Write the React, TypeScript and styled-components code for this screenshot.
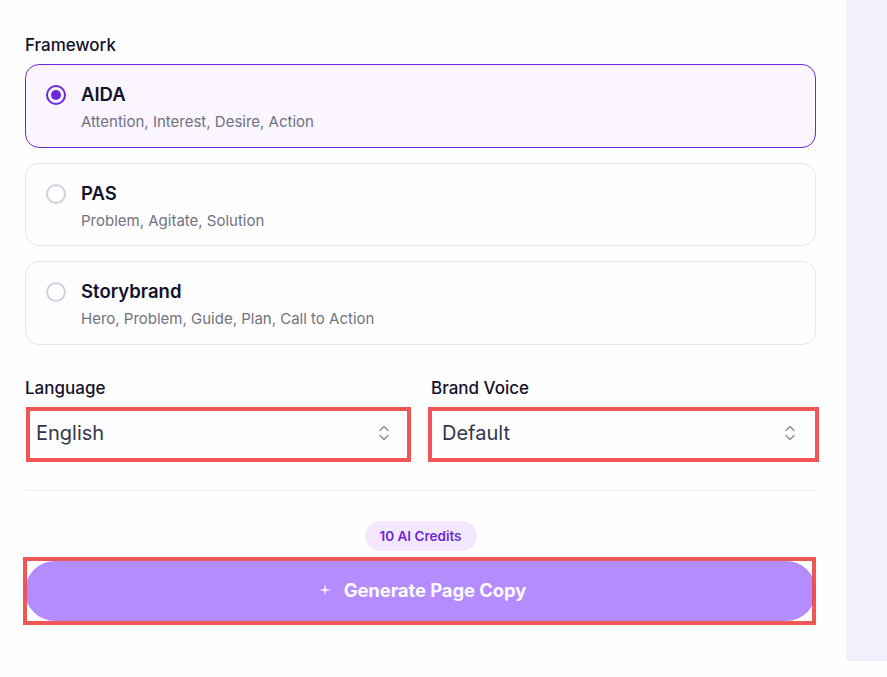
import React from "react";
import styled, { createGlobalStyle } from "styled-components";

const Global = createGlobalStyle`
  html, body { margin: 0; padding: 0; background: #fefefe; }
  body { font-family: Inter, "Liberation Sans", sans-serif; }
`;

const Page = styled.div`
  width: 887px;
  height: 677px;
  overflow: hidden;
  display: flex;
  align-items: flex-start;
  background: #fefefe;
`;

const Main = styled.main`
  width: 846px;
  box-sizing: border-box;
  padding: 35px 30px 0 25px;
  display: flex;
  flex-direction: column;
`;

const Side = styled.aside`
  width: 41px;
  height: 661px;
  background: #f3f0fd;
`;

const Label = styled.div`
  font-size: 17px;
  line-height: 21px;
  font-weight: 500;
  color: #14122b;
`;

const Cards = styled.div`
  margin-top: 8px;
  display: flex;
  flex-direction: column;
  gap: 15px;
`;

const Card = styled.div<{ $on?: boolean; $tall?: boolean }>`
  box-sizing: border-box;
  height: ${p => (p.$tall ? 84 : 83)}px;
  border-radius: 14px;
  border: 1px solid ${p => (p.$on ? "#6d28d9" : "#e7e7ec")};
  background: ${p => (p.$on ? "#faf5ff" : "#fefefe")};
  padding: 18px 20px 0;
  display: flex;
  gap: 15px;
`;

const Radio = styled.span<{ $on?: boolean }>`
  box-sizing: border-box;
  flex: none;
  width: 20px;
  height: 20px;
  margin-top: 2px;
  border-radius: 50%;
  border: 2px solid ${p => (p.$on ? "#6d28d9" : "#d3d1e0")};
  display: flex;
  align-items: center;
  justify-content: center;
  &::after {
    content: "";
    display: ${p => (p.$on ? "block" : "none")};
    width: 10px;
    height: 10px;
    border-radius: 50%;
    background: #6d28d9;
  }
`;

const CardBody = styled.div`
  display: flex;
  flex-direction: column;
  gap: 7px;
`;

const CardTitle = styled.div`
  font-size: 18.5px;
  line-height: 22px;
  font-weight: 600;
  color: #14122b;
`;

const CardSub = styled.div`
  font-size: 15px;
  line-height: 20px;
  color: #71717f;
`;

const Selects = styled.div`
  margin-top: 33px;
  display: grid;
  grid-template-columns: 1fr 1fr;
  gap: 21px;
`;

const Field = styled.div`
  display: flex;
  flex-direction: column;
  gap: 9px;
`;

const SelectBox = styled.div`
  position: relative;
  box-sizing: border-box;
  height: 50px;
  border-radius: 8px;
  padding: 0 18px 0 11px;
  display: flex;
  align-items: center;
  justify-content: space-between;
  font-size: 20px;
  color: #35354a;
  background: #fefefe;
`;

const Highlight = styled.span`
  position: absolute;
  pointer-events: none;
  border: 4px solid rgba(239, 68, 68, 0.9);
  box-sizing: border-box;
`;

const SelectMark = styled(Highlight)<{ $right?: boolean }>`
  top: -1px;
  bottom: -4px;
  left: ${p => (p.$right ? "-3px" : "0.5px")};
  right: ${p => (p.$right ? "-3px" : "-1px")};
`;

const Divider = styled.hr`
  margin: 32px 0 0;
  border: 0;
  height: 1px;
  background: #eeeef3;
`;

const Credits = styled.div`
  align-self: center;
  margin-top: 30px;
  height: 30px;
  padding: 0 15px;
  border-radius: 15px;
  background: #f3e8ff;
  color: #6d28d9;
  font-size: 13.5px;
  font-weight: 600;
  display: flex;
  align-items: center;
`;

const Generate = styled.button`
  position: relative;
  margin-top: 10px;
  height: 60px;
  width: 100%;
  border: 0;
  border-radius: 30px;
  background: #b58cff;
  color: #fdfbff;
  font-family: inherit;
  font-size: 18.5px;
  font-weight: 700;
  letter-spacing: -0.1px;
  display: flex;
  align-items: center;
  justify-content: center;
  gap: 13px;
  padding: 0 0 2px 4px;
`;

const ButtonMark = styled(Highlight)`
  top: -4px;
  bottom: -4px;
  left: -2px;
  right: 0;
`;

const Chevrons = () => (
  <svg width="16" height="20" viewBox="0 0 16 20" fill="none" stroke="#8b8b98" strokeWidth="1.4" strokeLinecap="round" strokeLinejoin="round">
    <path d="M4 7.5 8 3.5l4 4" />
    <path d="M4 12.5l4 4 4-4" />
  </svg>
);

const Sparkle = () => (
  <svg width="12" height="12" viewBox="0 0 12 12" fill="#fdfbff">
    <path d="M6 0 6.9 5.1 12 6 6.9 6.9 6 12 5.1 6.9 0 6 5.1 5.1Z" />
  </svg>
);

const frameworks = [
  { name: "AIDA", sub: "Attention, Interest, Desire, Action", on: true, tall: true },
  { name: "PAS", sub: "Problem, Agitate, Solution", on: false, tall: false },
  { name: "Storybrand", sub: "Hero, Problem, Guide, Plan, Call to Action", on: false, tall: true },
];

export default function App() {
  return (
    <Page>
      <Global />
      <Main>
        <Label>Framework</Label>
        <Cards>
          {frameworks.map(f => (
            <Card key={f.name} $on={f.on} $tall={f.tall}>
              <Radio $on={f.on} />
              <CardBody>
                <CardTitle>{f.name}</CardTitle>
                <CardSub>{f.sub}</CardSub>
              </CardBody>
            </Card>
          ))}
        </Cards>
        <Selects>
          <Field>
            <Label>Language</Label>
            <SelectBox>
              English
              <Chevrons />
              <SelectMark />
            </SelectBox>
          </Field>
          <Field>
            <Label>Brand Voice</Label>
            <SelectBox>
              Default
              <Chevrons />
              <SelectMark $right />
            </SelectBox>
          </Field>
        </Selects>
        <Divider />
        <Credits>10 AI Credits</Credits>
        <Generate>
          <Sparkle />
          Generate Page Copy
          <ButtonMark />
        </Generate>
      </Main>
      <Side />
    </Page>
  );
}
